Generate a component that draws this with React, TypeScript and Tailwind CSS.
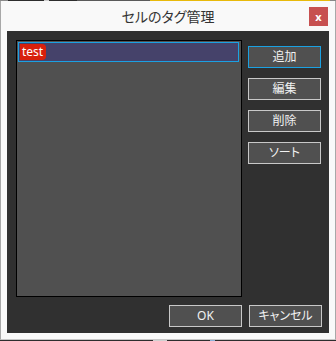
import React from 'react';

const font = {
  fontFamily: '"Noto Sans", "Noto Sans CJK JP", sans-serif',
  fontFeatureSettings: '"palt"',
};

const SideButton: React.FC<{ label: string; focused?: boolean }> = ({ label, focused }) => (
  <button
    className={
      'h-[22px] w-[73px] border bg-[#505050] text-[12px] leading-none text-[#f2f2f2] ' +
      (focused ? 'border-[#1ba1e2]' : 'border-[#c8c8c8]')
    }
  >
    {label}
  </button>
);

export default function App() {
  return (
    <div className="flex h-[341px] w-[336px] flex-col bg-[#2d2d2d]" style={font}>
      {/* desktop strip behind the window */}
      <div className="flex h-px shrink-0">
        <div className="w-[8px] bg-[#8a8a8a]" />
        <div className="w-[36px] bg-[#2d2d2d]" />
        <div className="w-[5px] bg-[#cfcfcf]" />
        <div className="w-[28px] bg-[#2d2d2d]" />
        <div className="w-[73px] bg-[#5a5a5a]" />
        <div className="w-[180px] bg-[#e8b90a]" />
        <div className="flex-1 bg-[#888888]" />
      </div>

      {/* dialog window */}
      <div className="flex flex-1 flex-col border-x border-b border-x-[#a8a8a8] border-b-[#c8c8c8] bg-[#f9f9f9]">
        <div className="relative flex h-[30px] shrink-0 items-center justify-center">
          <span className="text-[14px] text-[#333333]">セルのタグ管理</span>
          <div className="absolute right-[7px] top-[6px] flex h-[19px] w-[19px] items-center justify-center bg-[#c75050] text-[11px] font-bold leading-none text-white">
            x
          </div>
        </div>

        <div className="flex flex-1 px-[6px] pb-[6px]">
          <div className="flex flex-1 flex-col bg-[#303030] pl-[9px] pt-[9px]">
            <div className="flex gap-[6px]">
              {/* tag list */}
              <div className="h-[257px] w-[226px] border border-black bg-[#505050] p-px pr-[2px]">
                <div className="flex h-[20px] items-center border border-[#1ba1e2] bg-[#45426a] pl-px">
                  <span className="flex h-[16px] w-[26px] items-center rounded-r-[4px] bg-[#d8200c] pl-[2px] text-[12px] leading-none text-white">
                    test
                  </span>
                </div>
              </div>

              <div className="mt-[6px] flex flex-col gap-[10px]">
                <SideButton label="追加" focused />
                <SideButton label="編集" />
                <SideButton label="削除" />
                <SideButton label="ソート" />
              </div>
            </div>

            <div className="mt-[8px] flex justify-end gap-[7px] pr-[7px]">
              <button className="h-[22px] w-[73px] border border-[#c8c8c8] bg-[#505050] text-[12px] leading-none text-[#f2f2f2]">
                OK
              </button>
              <button className="h-[22px] w-[73px] border border-[#c8c8c8] bg-[#505050] text-[12px] leading-none text-[#f2f2f2]">
                キャンセル
              </button>
            </div>
          </div>
        </div>
      </div>

      <div className="flex h-px shrink-0">
        <div className="w-[153px] bg-[#2d2d2d]" />
        <div className="w-[14px] bg-[#d0d0d0]" />
        <div className="w-[43px] bg-[#2d2d2d]" />
        <div className="w-[5px] bg-[#8ab0d8]" />
        <div className="flex-1 bg-[#2d2d2d]" />
      </div>
    </div>
  );
}
